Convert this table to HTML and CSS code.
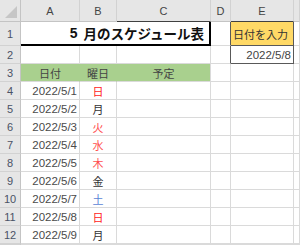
FILE: index.html
```html
<!DOCTYPE html>
<html lang="ja">
<head>
<meta charset="utf-8">
<link rel="stylesheet" href="styles.css">
</head>
<body>
<div class="sheet">
  <div class="corner"><span class="tri"></span></div>
  <div class="ch">A</div><div class="ch">B</div><div class="ch dk">C</div><div class="ch">D</div><div class="ch dk">E</div><div class="ch"></div>

  <div class="rh">1</div>
  <div class="title"><span class="num">5 </span>月のスケジュール表</div>
  <div class="c box-l"></div>
  <div class="c in-label">日付を入力</div>
  <div class="c"></div>

  <div class="rh">2</div>
  <div class="c"></div><div class="c"></div><div class="c"></div>
  <div class="c box-l"></div>
  <div class="c in-val">2022/5/8</div>
  <div class="c"></div>

  <div class="rh">3</div>
  <div class="c hd">日付</div><div class="c hd">曜日</div><div class="c hd last">予定</div>
  <div class="c"></div><div class="c"></div><div class="c"></div>

  <div class="rh">4</div><div class="c date">2022/5/1</div><div class="c day sun">日</div><div class="c"></div><div class="c"></div><div class="c"></div><div class="c"></div>
  <div class="rh">5</div><div class="c date">2022/5/2</div><div class="c day">月</div><div class="c"></div><div class="c"></div><div class="c"></div><div class="c"></div>
  <div class="rh">6</div><div class="c date">2022/5/3</div><div class="c day hol">火</div><div class="c"></div><div class="c"></div><div class="c"></div><div class="c"></div>
  <div class="rh">7</div><div class="c date">2022/5/4</div><div class="c day hol">水</div><div class="c"></div><div class="c"></div><div class="c"></div><div class="c"></div>
  <div class="rh">8</div><div class="c date">2022/5/5</div><div class="c day hol">木</div><div class="c"></div><div class="c"></div><div class="c"></div><div class="c"></div>
  <div class="rh">9</div><div class="c date">2022/5/6</div><div class="c day">金</div><div class="c"></div><div class="c"></div><div class="c"></div><div class="c"></div>
  <div class="rh">10</div><div class="c date">2022/5/7</div><div class="c day sat">土</div><div class="c"></div><div class="c"></div><div class="c"></div><div class="c"></div>
  <div class="rh">11</div><div class="c date">2022/5/8</div><div class="c day sun">日</div><div class="c"></div><div class="c"></div><div class="c"></div><div class="c"></div>
  <div class="rh">12</div><div class="c date">2022/5/9</div><div class="c day">月</div><div class="c"></div><div class="c"></div><div class="c"></div><div class="c"></div>
  <div class="rh"></div><div class="c"></div><div class="c"></div><div class="c"></div><div class="c"></div><div class="c"></div><div class="c"></div>
</div>
</body>
</html>
```

FILE: styles.css
```css
* { box-sizing: border-box; }
html, body {
  margin: 0;
  padding: 0;
  background: #fff;
  overflow: hidden;
}
.sheet {
  width: 300px;
  height: 245px;
  overflow: hidden;
  display: grid;
  grid-template-columns: 21px 59px 37px 94px 20px 63px 1fr;
  grid-template-rows: 22px 24px repeat(11, 18px);
  font-family: "Liberation Sans", "Noto Sans CJK JP", sans-serif;
  font-size: 11px;
  color: #333;
}
.sheet > div {
  border-right: 1px solid #dadada;
  border-bottom: 1px solid #dadada;
  display: flex;
  align-items: center;
  white-space: pre;
  overflow: hidden;
}
.sheet > .corner {
  background: #e6e6e6;
  border-right: 1px solid #c4c4c4;
  border-bottom: 1px solid #c4c4c4;
  justify-content: flex-end;
  align-items: flex-end;
  padding: 0 3px 3px 0;
}
.tri {
  width: 0;
  height: 0;
  border-left: 12px solid transparent;
  border-bottom: 12px solid #c6c6c6;
}
.sheet > .ch {
  background: #e6e6e6;
  border-right: 1px solid #d2d2d2;
  border-bottom: 1px solid #c4c4c4;
  justify-content: center;
  color: #444;
  padding-top: 1px;
}
.sheet > .ch.dk { border-bottom-color: #404040; }
.sheet > .rh {
  background: #e6e6e6;
  border-right: 1px solid #c4c4c4;
  border-bottom: 1px solid #d2d2d2;
  justify-content: center;
  color: #4a5265;
}
.sheet > .title {
  grid-column: 2 / 5;
  justify-content: flex-end;
  padding-right: 5px;
  font-family: "Noto Sans CJK JP", sans-serif;
  font-weight: bold;
  font-size: 13.5px;
  color: #111;
  border-bottom: 2px solid #000;
  border-right: 2px solid #000;
}
.num {
  font-family: "Liberation Sans", sans-serif;
  font-weight: bold;
  font-size: 14px;
  padding-right: 2px;
}
.sheet > .box-l { border-right-color: #595959; }
.sheet > .in-label {
  background: #ffd966;
  border-right-color: #595959;
  border-bottom-color: #595959;
  padding-left: 2px;
  font-family: "Noto Sans CJK JP", sans-serif;
  color: #333;
}
.sheet > .in-val {
  border-right-color: #595959;
  border-bottom-color: #595959;
  justify-content: flex-end;
  padding-right: 2px;
  font-size: 11.5px;
  color: #444;
}
.sheet > .hd {
  background: #a9d08e;
  border-right-color: #a9d08e;
  justify-content: center;
  font-family: "Noto Sans CJK JP", sans-serif;
  color: #444;
}
.sheet > .hd.last { border-right-color: #dadada; }
.sheet > .date {
  justify-content: flex-end;
  padding-right: 2px;
  font-size: 11.5px;
  color: #4a4a4a;
}
.sheet > .day {
  justify-content: center;
  font-family: "Noto Sans CJK JP", sans-serif;
  color: #333;
}
.sheet > .day.sun { color: #ff1a1a; }
.sheet > .day.hol { color: #ff4f4f; }
.sheet > .day.sat { color: #5b86d6; }
```
